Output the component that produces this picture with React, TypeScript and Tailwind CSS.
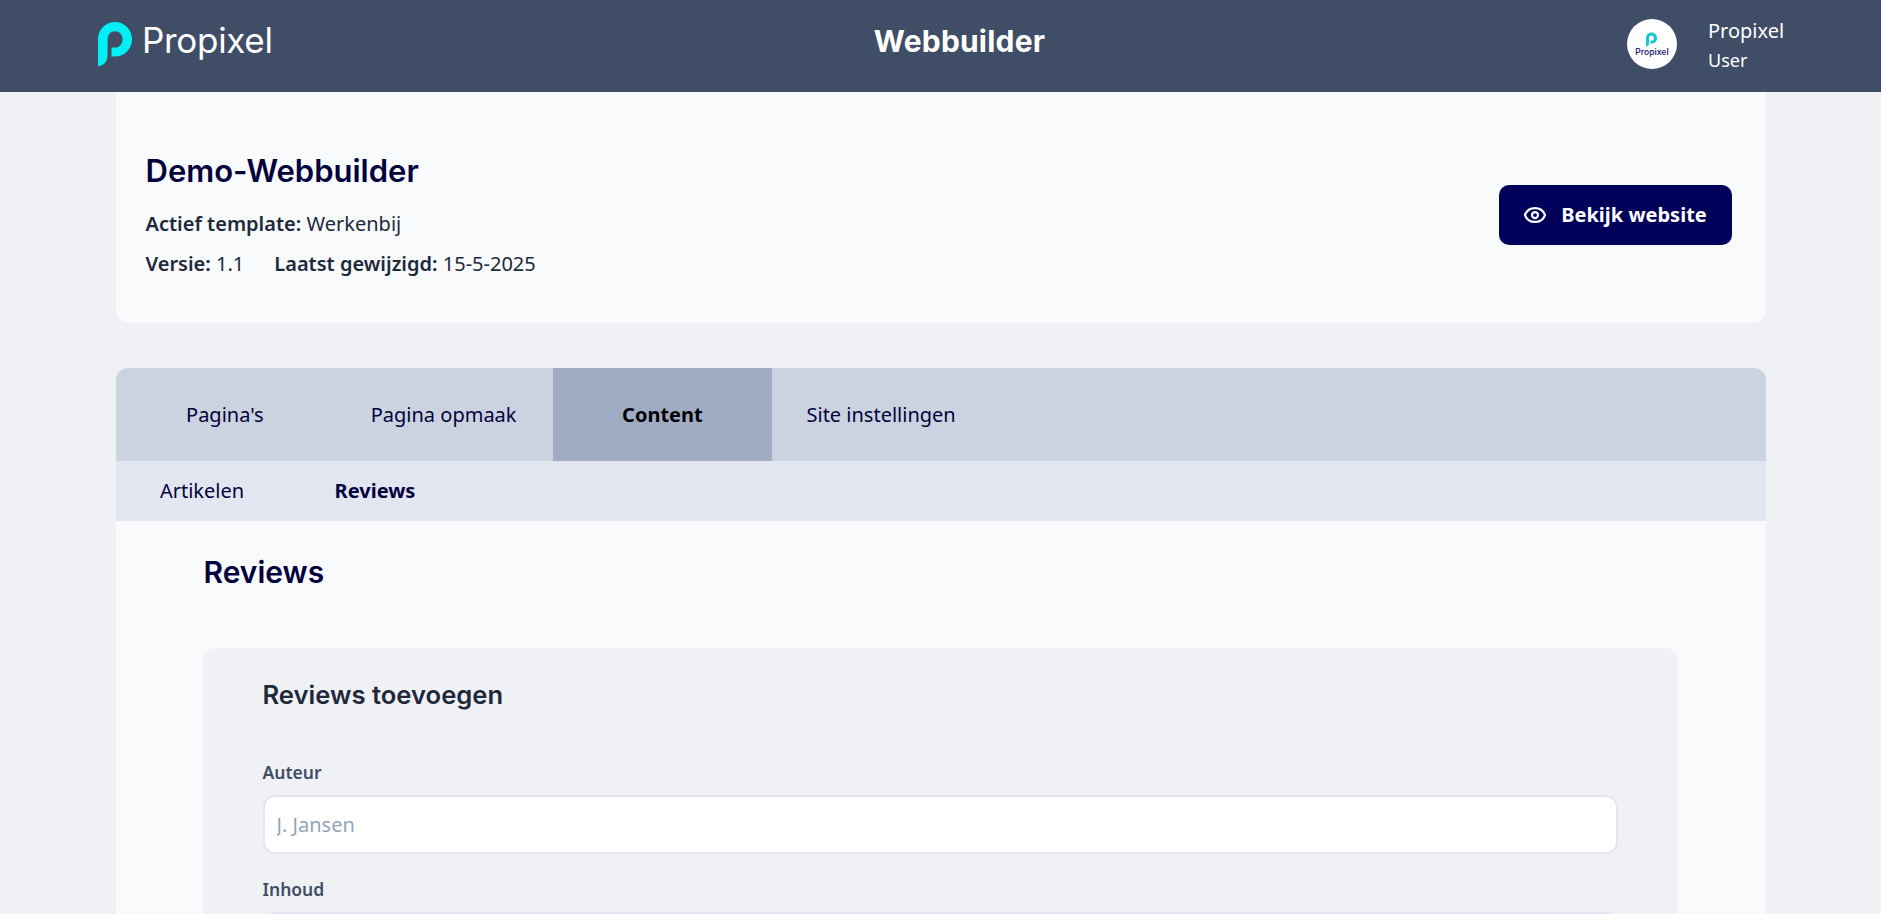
import React from "react";
import { Eye } from "lucide-react";

const tabs = ["Pagina's", "Pagina opmaak", "Content", "Site instellingen"];
const subTabs = ["Artikelen", "Reviews"];

const headingFont = "font-['Inter',sans-serif]";

const PMark: React.FC<{ className?: string; color: string }> = ({ className, color }) => (
  <svg viewBox="0 0 34 44" className={className}>
    <path
      fill={color}
      d="M0 17C0 7.6 7.6 0 17 0s17 7.6 17 17.2C34 27 26.4 34.500 17 34.500h-3.500v-9H17c4.300 0 7.600-3.600 7.600-8.300 0-4.400-3.400-7.900-7.600-7.900s-7.400 3.400-7.400 7.700V33C9.600 39.500 5.500 44 0 44V17z"
    />
  </svg>
);

const Header: React.FC = () => (
  <header className="h-[92px] bg-[#3f4d66] flex items-center justify-between pl-[98px] pr-[97px] pb-[4px] shrink-0">
    <div className="w-[194px] flex items-center gap-[10px]">
      <PMark className="w-[34px] h-[44px] shrink-0" color="#00f0f5" />
      <span className={`${headingFont} text-[35px] font-normal text-white tracking-[-0.3px] leading-none pb-[8px]`}>Propixel</span>
    </div>
    <h1 className={`${headingFont} text-[30px] font-bold text-white tracking-[0.2px] leading-none pb-[6px]`}>Webbuilder</h1>
    <div className="w-[157px] flex items-center gap-[31px]">
      <div className="w-[50px] h-[50px] shrink-0 rounded-full bg-white flex flex-col items-center justify-center">
        <PMark className="w-[11px] h-[15px]" color="#16c5d0" />
        <span className={`${headingFont} text-[8.5px] font-semibold text-[#2f2f7a] leading-[10px]`}>Propixel</span>
      </div>
      <div className="text-white pt-[2px]">
        <div className="text-[20px] leading-[30px]">Propixel</div>
        <div className="text-[18px] leading-[28px]">User</div>
      </div>
    </div>
  </header>
);

const SiteCard: React.FC = () => (
  <section className="h-[231px] bg-[#f8fafc] rounded-b-[12px] flex items-center justify-between pl-[30px] pr-[34px] pt-[15px]">
    <div className="text-[20px] text-[#1e293b]">
      <h2 className={`${headingFont} text-[31px] font-semibold text-[#03023c] leading-[36px] mb-[21px]`}>Demo-Webbuilder</h2>
      <p className="leading-[28px] mb-[12px]">
        <strong className="font-semibold">Actief template:</strong> Werkenbij
      </p>
      <p className="leading-[28px] flex gap-[30px]">
        <span>
          <strong className="font-semibold">Versie:</strong> 1.1
        </span>
        <span>
          <strong className="font-semibold">Laatst gewijzigd:</strong> 15-5-2025
        </span>
      </p>
    </div>
    <button className="h-[60px] w-[233px] rounded-[10px] bg-[#00005a] text-white text-[20px] font-bold flex items-center justify-center gap-[14px]">
      <Eye className="w-[24px] h-[24px]" strokeWidth={2.25} />
      Bekijk website
    </button>
  </section>
);

const Field: React.FC<{ label: string; placeholder: string }> = ({ label, placeholder }) => (
  <div className="mb-[23px]">
    <label className="block text-[17.5px] font-semibold text-[#3f4d66] leading-[24px] mb-[11px]">{label}</label>
    <input
      placeholder={placeholder}
      className="w-full h-[59px] rounded-[12px] border-2 border-[#e2e6f0] bg-white px-[12px] text-[20px] placeholder:text-[#94a3b8] outline-none"
    />
  </div>
);

const App: React.FC = () => {
  return (
    <div className="h-screen overflow-hidden bg-[#f0f1f5] flex flex-col font-['Noto_Sans',sans-serif]">
      <Header />
      <main className="w-[1650px] mx-auto">
        <SiteCard />
        <section className="mt-[45px] rounded-t-[12px] overflow-hidden bg-[#f8fafc]">
          <nav className="h-[93px] bg-[#cbd2e0] flex">
            {tabs.map((tab) => (
              <button
                key={tab}
                className={`w-[218.75px] text-[20px] ${
                  tab === "Content" ? "bg-[#a0acc4] font-bold text-black" : "text-[#03023c]"
                }`}
              >
                {tab}
              </button>
            ))}
          </nav>
          <nav className="h-[60px] bg-[#e2e6f0] flex">
            {subTabs.map((tab) => (
              <button
                key={tab}
                className={`w-[173px] text-[20px] text-[#03023c] ${tab === "Reviews" ? "font-bold" : ""}`}
              >
                {tab}
              </button>
            ))}
          </nav>
          <div className="pl-[88px] pr-[88px] pt-[31px]">
            <h2 className={`${headingFont} text-[30px] font-semibold text-[#03023c] leading-[40px] mb-[56px]`}>Reviews</h2>
            <div className="bg-[#f0f1f5] rounded-[12px] px-[60px] pt-[29px] pb-[40px] -ml-px">
              <h3 className={`${headingFont} text-[25.6px] font-semibold text-[#1e293b] leading-[36px] mb-[47px]`}>Reviews toevoegen</h3>
              <Field label="Auteur" placeholder="J. Jansen" />
              <Field label="Inhoud" placeholder="" />
            </div>
          </div>
        </section>
      </main>
    </div>
  );
};

export default App;
